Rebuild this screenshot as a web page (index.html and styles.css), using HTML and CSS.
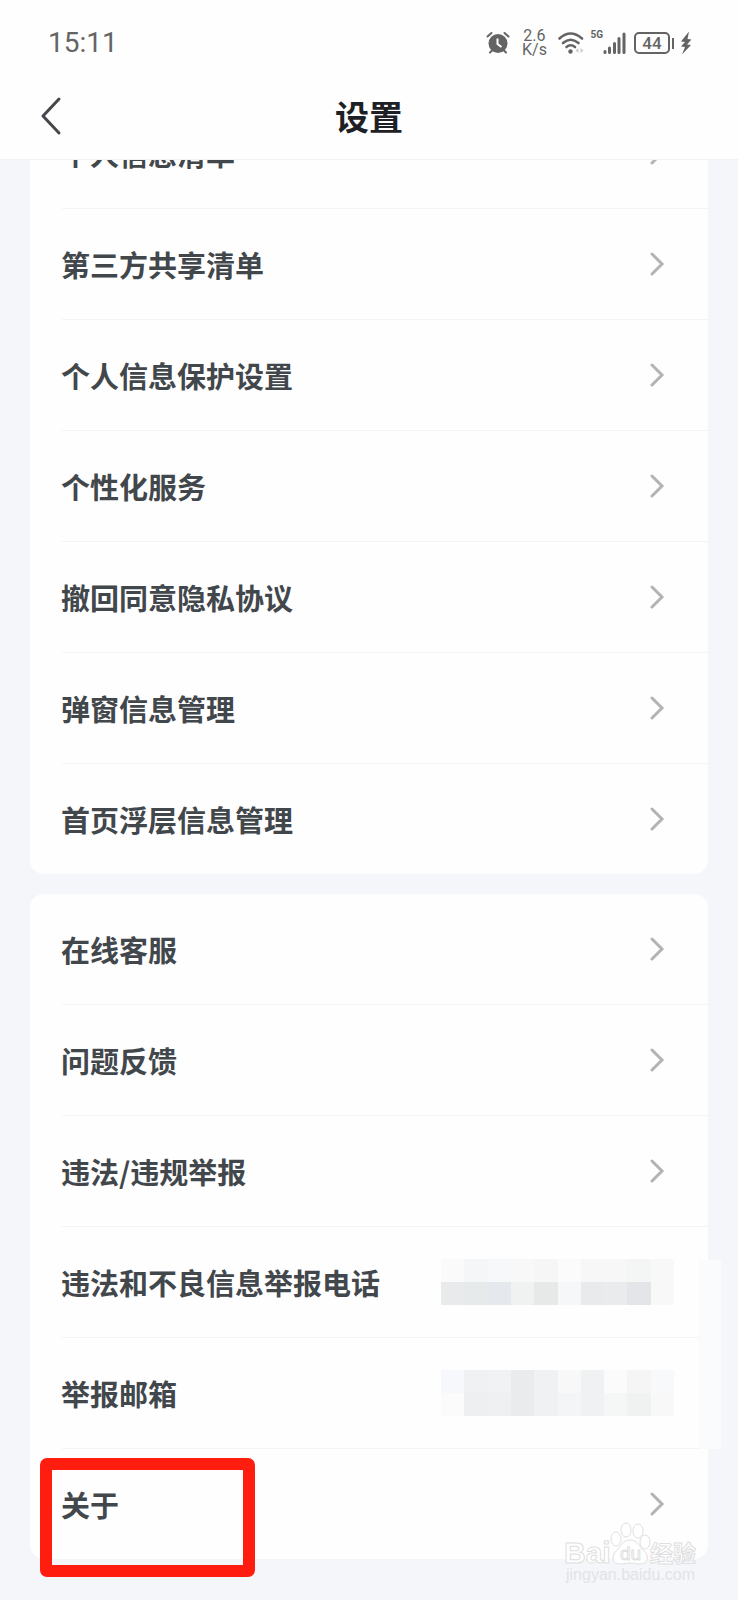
FILE: index.html
```html
<!DOCTYPE html>
<html lang="zh-CN">
<head>
    <meta charset="UTF-8">
    <meta name="viewport" content="width=device-width, initial-scale=1.0">
    <title>设置</title>
    <link rel="stylesheet" href="styles.css">
</head>
<body>
    <svg class="symbols" aria-hidden="true">
        <symbol id="arrow" viewBox="0 0 24 24">
            <path d="M2 2 L12 12 L2 22" fill="none" stroke="#b1b3b4" stroke-width="3" stroke-linecap="round"/>
        </symbol>
    </svg>

    <header class="top">
        <div class="status">
            <span class="time">15:11</span>
            <div class="status-icons">
                <svg class="alarm" width="24" height="24" viewBox="0 0 24 24">
                    <circle cx="12" cy="12.500" r="9.500" fill="#646464"/>
                    <path d="M1.500 5.500 L5.500 2 M22.500 5.500 L18.500 2 M4 21.500 L7 18.500 M20 21.500 L17 18.500" stroke="#646464" stroke-width="2" stroke-linecap="round"/>
                    <path d="M11.500 7.500 V13 L15.500 16" fill="none" stroke="#fff" stroke-width="2"/>
                </svg>
                <div class="speed"><span>2.6</span><span>K/s</span></div>
                <svg class="wifi" width="26" height="24" viewBox="0 0 26 24">
                    <g fill="none" stroke="#646464" stroke-width="2.600" stroke-linecap="round">
                        <path d="M1.500 7.500 Q12.500 -2.500 24 7.500"/>
                        <path d="M5 12 Q12.500 5.500 20.500 12"/>
                        <path d="M8.500 16 Q12.500 12.500 17 16"/>
                    </g>
                    <circle cx="12.500" cy="20.500" r="2.200" fill="#646464"/>
                    <path d="M20.500 17 V22 L17.500 19.500Z M22.500 17 V22 L25.500 19.500Z" fill="#ccc"/>
                </svg>
                <span class="net">5G</span>
                <svg class="bars" width="23" height="24" viewBox="0 0 23 24">
                    <path d="M2 20.500 V21.500 M6.500 17 V21.500 M11.500 12.500 V21.500 M16 7.500 V21.500 M21 3 V21.500" stroke="#646464" stroke-width="3" stroke-linecap="round"/>
                </svg>
                <span class="battery">44</span>
                <svg class="bolt" width="12" height="24" viewBox="0 0 12 24">
                    <path d="M9 0.500 L1 10.500 L5 11 L1 15.500 L5 16 L2 23.500 L11 14 L7 13.500 L11.500 8.500 L7.500 8Z" fill="#646464"/>
                </svg>
            </div>
        </div>
        <nav class="bar">
            <button class="back" type="button" aria-label="返回">
                <svg width="24" height="40" viewBox="0 0 24 40">
                    <path d="M19 3 L3 20 L19 37" fill="none" stroke="#45484a" stroke-width="3" stroke-linecap="round" stroke-linejoin="round"/>
                </svg>
            </button>
            <h1>设置</h1>
        </nav>
    </header>

    <main class="list">
        <section class="card card-first">
            <a class="row" href="#"><span>个人信息清单</span><svg class="arrow"><use href="#arrow"/></svg></a>
            <a class="row" href="#"><span>第三方共享清单</span><svg class="arrow"><use href="#arrow"/></svg></a>
            <a class="row" href="#"><span>个人信息保护设置</span><svg class="arrow"><use href="#arrow"/></svg></a>
            <a class="row" href="#"><span>个性化服务</span><svg class="arrow"><use href="#arrow"/></svg></a>
            <a class="row" href="#"><span>撤回同意隐私协议</span><svg class="arrow"><use href="#arrow"/></svg></a>
            <a class="row" href="#"><span>弹窗信息管理</span><svg class="arrow"><use href="#arrow"/></svg></a>
            <a class="row" href="#"><span>首页浮层信息管理</span><svg class="arrow"><use href="#arrow"/></svg></a>
        </section>

        <section class="card">
            <a class="row" href="#"><span>在线客服</span><svg class="arrow"><use href="#arrow"/></svg></a>
            <a class="row" href="#"><span>问题反馈</span><svg class="arrow"><use href="#arrow"/></svg></a>
            <a class="row" href="#"><span>违法/违规举报</span><svg class="arrow"><use href="#arrow"/></svg></a>
            <div class="row">
                <span>违法和不良信息举报电话</span>
                <svg class="mosaic" viewBox="0 0 10 2" preserveAspectRatio="none" shape-rendering="crispEdges">
                    <rect width="10" height="2" fill="#f8f8f8"/>
                    <rect x="0" width="1" height="1" fill="#fafafa"/>
                    <rect x="1" width="1" height="1" fill="#f5f6f8"/>
                    <rect x="2" width="1" height="1" fill="#f7f8fa"/>
                    <rect x="4" width="1" height="1" fill="#f6f6f6"/>
                    <rect x="5" width="1" height="1" fill="#fbfbfb"/>
                    <rect x="6" width="2" height="1" fill="#f7f7f7"/>
                    <rect x="8" width="1" height="1" fill="#f4f6f6"/>
                    <rect x="0" y="1" width="1" height="1" fill="#e8eaeb"/>
                    <rect x="1" y="1" width="1" height="1" fill="#e7eaeb"/>
                    <rect x="2" y="1" width="1" height="1" fill="#e5e9ed"/>
                    <rect x="3" y="1" width="1" height="1" fill="#f0f2f1"/>
                    <rect x="4" y="1" width="1" height="1" fill="#e7e9e9"/>
                    <rect x="5" y="1" width="1" height="1" fill="#f5f7f9"/>
                    <rect x="6" y="1" width="1" height="1" fill="#e9eaec"/>
                    <rect x="7" y="1" width="1" height="1" fill="#eaebed"/>
                    <rect x="8" y="1" width="1" height="1" fill="#e4e5e9"/>
                </svg>
            </div>
            <div class="row">
                <span>举报邮箱</span>
                <svg class="mosaic" viewBox="0 0 10 2" preserveAspectRatio="none" shape-rendering="crispEdges">
                    <rect width="10" height="2" fill="#f8f8f8"/>
                    <rect x="0" width="1" height="1" fill="#f7f8fb"/>
                    <rect x="0" y="1" width="1" height="1" fill="#fbfbfb"/>
                    <rect x="1" width="1" height="1" fill="#f0f1f2"/>
                    <rect x="1" y="1" width="1" height="1" fill="#edeff0"/>
                    <rect x="2" width="1" height="1" fill="#f1f2f3"/>
                    <rect x="2" y="1" width="1" height="1" fill="#eff0f1"/>
                    <rect x="3" width="1" height="2" fill="#eaebec"/>
                    <rect x="4" width="1" height="2" fill="#f0f1f3"/>
                    <rect x="5" y="1" width="1" height="1" fill="#f3f5f6"/>
                    <rect x="6" width="1" height="2" fill="#eff1f3"/>
                    <rect x="7" width="1" height="1" fill="#fbfbfb"/>
                    <rect x="7" y="1" width="1" height="1" fill="#f5f6f6"/>
                    <rect x="8" width="1" height="1" fill="#f5f5f5"/>
                    <rect x="8" y="1" width="1" height="1" fill="#f0f2f2"/>
                    <rect x="9" width="1" height="1" fill="#f8f9fb"/>
                </svg>
            </div>
            <a class="row about" href="#"><span>关于</span><svg class="arrow"><use href="#arrow"/></svg></a>
            <div class="patch"></div>
        </section>

        <svg class="watermark" width="136" height="66" viewBox="0 0 136 66">
            <g fill="#fff" stroke="#dedfe1" stroke-width="1">
                <ellipse cx="52" cy="19" rx="5" ry="7"/>
                <ellipse cx="62" cy="10" rx="5" ry="7"/>
                <ellipse cx="74" cy="11" rx="5" ry="7"/>
                <ellipse cx="81" cy="22" rx="5" ry="7"/>
                <path d="M66 20 C74 20 75 27 80 31 C86 36 84 44 76 44 C71 44 70 43 66 43 C62 43 60 44 56 44 C48 44 47 36 52 31 C57 27 58 20 66 20Z"/>
            </g>
            <text class="wm-name" x="0" y="43">Bai</text>
            <text class="wm-du" x="56" y="40">du</text>
            <text class="wm-cn" x="86" y="42">经验</text>
            <text class="wm-url" x="2" y="60">jingyan.baidu.com</text>
        </svg>
    </main>
</body>
</html>
```
FILE: styles.css
```css
*,
*::before,
*::after {
    box-sizing: border-box;
}

body {
    margin: 0;
    min-height: 100vh;
    background: #f5f6fa;
    color: #42474c;
    font-family: "Noto Sans CJK SC", sans-serif;
}

.symbols {
    position: absolute;
    width: 0;
    height: 0;
}

.top {
    position: sticky;
    top: 0;
    z-index: 1;
    padding-bottom: 13px;
    background: #fefefe;
    border-bottom: 1px solid #f2f2f3;
}

.status {
    display: flex;
    justify-content: space-between;
    align-items: center;
    height: 85px;
    padding: 0 46px 0 48px;
    color: #646464;
}

.time {
    font-family: Roboto, sans-serif;
    font-size: 28px;
}

.status-icons {
    display: flex;
    align-items: center;
    font-family: Roboto, sans-serif;
}

.speed {
    display: flex;
    flex-direction: column;
    align-items: center;
    width: 24px;
    margin: 0 12px;
    font-size: 16px;
    line-height: 14px;
}

.net {
    align-self: flex-start;
    margin-left: 6px;
    font-size: 10px;
    font-weight: 700;
    line-height: 12px;
}

.battery {
    position: relative;
    width: 36px;
    height: 22px;
    margin: 0 10px 0 8px;
    border: 2px solid #646464;
    border-radius: 5px;
    font-size: 17px;
    font-weight: 500;
    line-height: 18px;
    text-align: center;
}

.battery::after {
    content: "";
    position: absolute;
    top: 4px;
    right: -6px;
    width: 2px;
    height: 11px;
    background: #646464;
}

.bar {
    display: grid;
    grid-template-columns: 1fr auto 1fr;
    align-items: center;
    height: 61px;
    padding: 0 40px;
}

.back {
    width: 24px;
    height: 40px;
    padding: 0;
    border: none;
    background: none;
    cursor: pointer;
}

.back svg {
    display: block;
}

h1 {
    margin: 0;
    color: #1d2126;
    font-size: 34px;
    font-weight: 700;
    line-height: 40px;
}

.list {
    position: relative;
    display: flex;
    flex-direction: column;
    gap: 20px;
    padding: 0 30px 42px;
}

.card {
    position: relative;
    background: #fefefe;
    border-radius: 14px;
}

/* scrolled partly under the header */
.card-first {
    margin-top: -62px;
}

.row {
    position: relative;
    display: flex;
    justify-content: space-between;
    align-items: center;
    height: 110px;
    padding: 0 34px 0 31px;
    color: inherit;
    font-size: 29px;
    font-weight: 700;
    line-height: 40px;
    text-decoration: none;
}

.row + .row {
    height: 111px;
}

.row + .row::before {
    content: "";
    position: absolute;
    top: 0;
    left: 32px;
    right: 0;
    height: 1px;
    background: #f4f4f5;
}

.arrow {
    width: 24px;
    height: 24px;
}

.mosaic {
    width: 233px;
    height: 46px;
}

.about::after {
    content: "";
    position: absolute;
    top: 10px;
    left: 10px;
    width: 215px;
    height: 119px;
    border: 12px solid #ff1d10;
    border-radius: 7px;
}

.patch {
    position: absolute;
    right: -13px;
    bottom: 110px;
    width: 23px;
    height: 189px;
    background: #fafbfd;
}

.watermark {
    position: absolute;
    right: 38px;
    bottom: 15px;
    fill: #fff;
    stroke: #dedfe1;
    font-family: "Liberation Sans", sans-serif;
}

.wm-name {
    font-size: 30px;
    font-weight: 700;
}

.wm-du {
    font-size: 19px;
}

.wm-cn {
    font-family: "Noto Sans CJK SC", sans-serif;
    font-size: 23px;
    font-weight: 700;
}

.wm-url {
    fill: #e2e3e6;
    stroke: none;
    font-size: 16px;
}
```
